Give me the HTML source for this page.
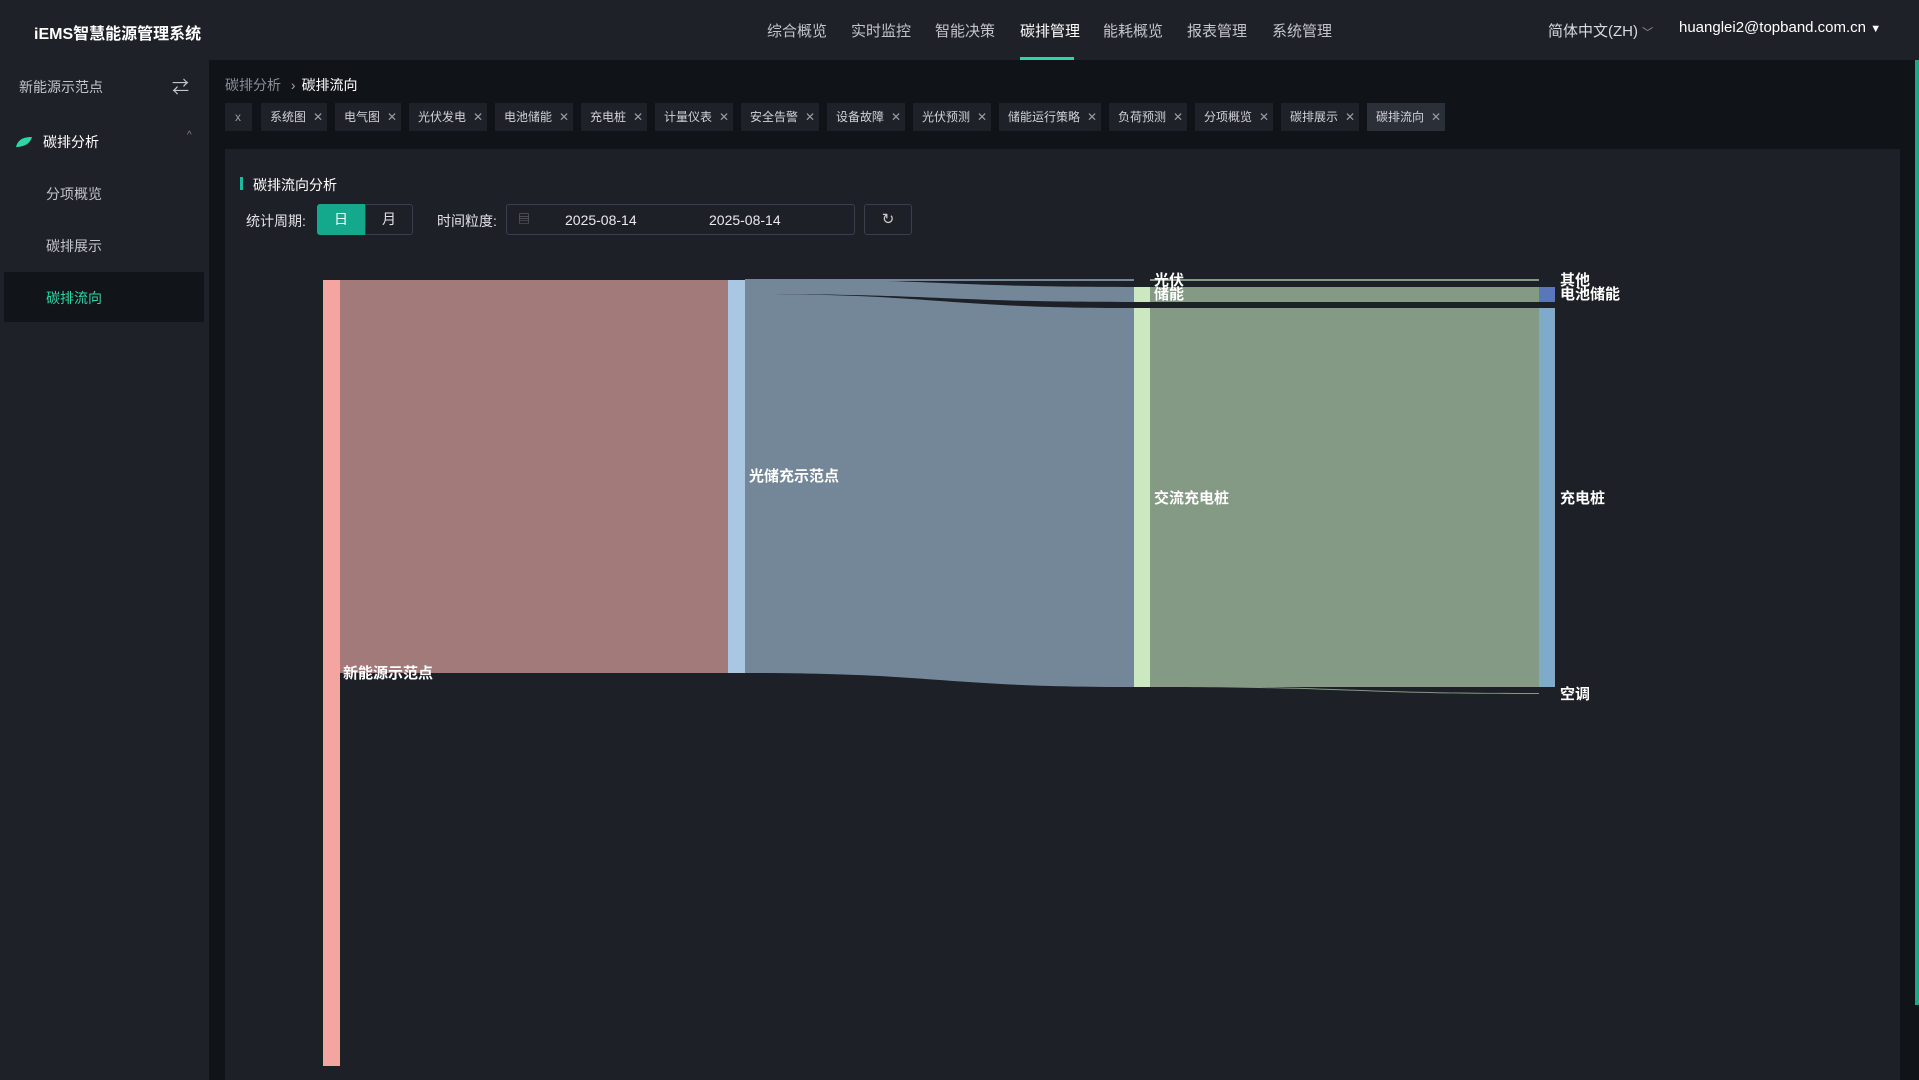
<!DOCTYPE html>
<html><head><meta charset="utf-8"><style>
*{margin:0;padding:0;box-sizing:border-box}
body{width:1919px;height:1080px;overflow:hidden;background:#101318;font-family:"Liberation Sans","Noto Sans CJK SC",sans-serif;color:#c9ccd1;position:relative}
.hdr{position:absolute;left:0;top:0;width:1919px;height:60px;background:#1e2128}
.logo{position:absolute;left:34px;top:20px;font-size:16px;font-weight:bold;color:#fff}
.nav{position:absolute;top:20px;font-size:15px;color:#c2c5ca}
.nav.act{color:#fff}
.uline{position:absolute;left:1020px;top:57px;width:54px;height:3px;background:#2ed6a6}
.side{position:absolute;left:0;top:60px;width:209px;height:1020px;background:#1e2128}
.st{position:absolute;font-size:14px;color:#c2c5ca}
.main{position:absolute;left:225px;top:149px;width:1675px;height:931px;background:#1d2027}
.tab{position:absolute;top:103px;height:28px;background:#1e2128;font-size:12px;color:#d0d3d8;line-height:28px;padding-left:9px}
.tab b{font-weight:normal;color:#9a9ea5;margin-left:7px;font-size:12px}
</style></head><body>
<div class="hdr">
<div class="logo">iEMS智慧能源管理系统</div>
<div class="nav" style="left:767px">综合概览</div>
<div class="nav" style="left:851px">实时监控</div>
<div class="nav" style="left:935px">智能决策</div>
<div class="nav act" style="left:1020px">碳排管理</div>
<div class="nav" style="left:1103px">能耗概览</div>
<div class="nav" style="left:1187px">报表管理</div>
<div class="nav" style="left:1272px">系统管理</div>
<div class="uline"></div>
<div class="nav" style="left:1548px;color:#d8dbe0">简体中文(ZH) <span style="font-size:11px;color:#999">﹀</span></div>
<div class="nav" style="left:1679px;top:19px;color:#fff">huanglei2@topband.com.cn <span style="font-size:11px">▼</span></div>
</div>
<div class="side">
<div class="st" style="left:19px;top:17px">新能源示范点</div>
<div class="st" style="left:172px;top:13px;font-size:17px">⇄</div>
<svg style="position:absolute;left:15px;top:76px" width="18" height="12"><path d="M1 11 C3 3 9 1 17 1 C15 8 9 11 1 11Z" fill="#2ed6a6"/></svg>
<div class="st" style="left:43px;top:72px;color:#fff">碳排分析</div>
<div class="st" style="left:187px;top:70px;font-size:10px;color:#888">^</div>
<div class="st" style="left:46px;top:124px">分项概览</div>
<div class="st" style="left:46px;top:176px">碳排展示</div>
<div style="position:absolute;left:4px;top:212px;width:200px;height:50px;background:#111419"></div>
<div class="st" style="left:46px;top:228px;color:#2ed6a6">碳排流向</div>
</div>
<div style="position:absolute;left:225px;top:75px;font-size:14px;color:#8a8e95">碳排分析 <span style="color:#aaa;margin:0 6px">›</span><span style="color:#fff">碳排流向</span></div>
<div class="tab" style="left:225px;width:27px;padding-left:10px;color:#9a9ea5">x</div>
<div class="tab" style="left:261px;width:66px">系统图<b>✕</b></div>
<div class="tab" style="left:335px;width:66px">电气图<b>✕</b></div>
<div class="tab" style="left:409px;width:78px">光伏发电<b>✕</b></div>
<div class="tab" style="left:495px;width:78px">电池储能<b>✕</b></div>
<div class="tab" style="left:581px;width:66px">充电桩<b>✕</b></div>
<div class="tab" style="left:655px;width:78px">计量仪表<b>✕</b></div>
<div class="tab" style="left:741px;width:78px">安全告警<b>✕</b></div>
<div class="tab" style="left:827px;width:78px">设备故障<b>✕</b></div>
<div class="tab" style="left:913px;width:78px">光伏预测<b>✕</b></div>
<div class="tab" style="left:999px;width:102px">储能运行策略<b>✕</b></div>
<div class="tab" style="left:1109px;width:78px">负荷预测<b>✕</b></div>
<div class="tab" style="left:1195px;width:78px">分项概览<b>✕</b></div>
<div class="tab" style="left:1281px;width:78px">碳排展示<b>✕</b></div>
<div class="tab" style="left:1367px;width:78px;background:#2a2f38">碳排流向<b>✕</b></div>
<div style="position:absolute;left:1915px;top:60px;width:4px;height:945px;background:#1fa888"></div>
<div class="main"></div>
<div style="position:absolute;left:240px;top:177px;width:3px;height:13px;background:#1fb8a0"></div>
<div style="position:absolute;left:253px;top:175px;font-size:14px;color:#fff">碳排流向分析</div>
<div style="position:absolute;left:246px;top:211px;font-size:14px;color:#e0e2e6">统计周期:</div>
<div style="position:absolute;left:317px;top:204px;width:48px;height:31px;background:#14a98c;color:#fff;font-size:14px;text-align:center;line-height:31px;border-radius:3px 0 0 3px">日</div>
<div style="position:absolute;left:365px;top:204px;width:48px;height:31px;border:1px solid #3a3f48;color:#e0e2e6;font-size:14px;text-align:center;line-height:29px;border-radius:0 3px 3px 0">月</div>
<div style="position:absolute;left:437px;top:211px;font-size:14px;color:#e0e2e6">时间粒度:</div>
<div style="position:absolute;left:506px;top:204px;width:349px;height:31px;border:1px solid #3a3f48;border-radius:3px;font-size:14px;color:#e8eaee">
<span style="position:absolute;left:11px;top:5px;color:#777;font-size:12px">▤</span>
<span style="position:absolute;left:58px;top:7px">2025-08-14</span>
<span style="position:absolute;left:202px;top:7px">2025-08-14</span></div>
<div style="position:absolute;left:864px;top:204px;width:48px;height:31px;border:1px solid #3a3f48;border-radius:3px;color:#ccc;font-size:15px;text-align:center;line-height:29px">↻</div>
<svg style="position:absolute;left:0;top:0" width="1919" height="1080">
<g font-family="Liberation Sans,Noto Sans CJK SC,sans-serif" font-size="15" font-weight="bold" fill="#fff">
<path d="M340 280 L728 280 L728 673 L340 673Z" fill="#a37a7a"/>
<rect x="323" y="280" width="17" height="786" fill="#f4a5a0"/>
<path d="M745 279 C940 279 940 279 1134 279 L1134 281 C940 281 940 281 745 281Z" fill="#738799"/>
<path d="M745 279 C940 279 940 287 1134 287 L1134 302 C940 302 940 294 745 294Z" fill="#738799"/>
<path d="M745 294 C940 294 940 308 1134 308 L1134 687 C940 687 940 673 745 673Z" fill="#738799"/>
<path d="M1150 279 L1539 279 L1539 281 L1150 281Z" fill="#849a84"/>
<path d="M1150 287 L1539 287 L1539 302 L1150 302Z" fill="#849a84"/>
<path d="M1150 308 L1539 308 L1539 687 L1150 687Z" fill="#849a84"/>
<path d="M1150 686 C1345 686 1345 693 1539 693 L1539 694 C1345 694 1345 687 1150 687Z" fill="#849a84"/>
<rect x="728" y="280" width="17" height="393" fill="#a9c6e2"/>
<rect x="1134" y="287" width="16" height="15" fill="#cbe8c0"/>
<rect x="1134" y="308" width="16" height="379" fill="#cbe8c0"/>
<rect x="1539" y="287" width="16" height="15" fill="#5878bb"/>
<rect x="1539" y="308" width="16" height="379" fill="#7eaacb"/>
<text x="343" y="678">新能源示范点</text>
<text x="749" y="481">光储充示范点</text>
<text x="1154" y="285">光伏</text>
<text x="1154" y="299">储能</text>
<text x="1154" y="503">交流充电桩</text>
<text x="1560" y="285">其他</text>
<text x="1560" y="299">电池储能</text>
<text x="1560" y="503">充电桩</text>
<text x="1560" y="699">空调</text>
</g></svg>
</body></html>
